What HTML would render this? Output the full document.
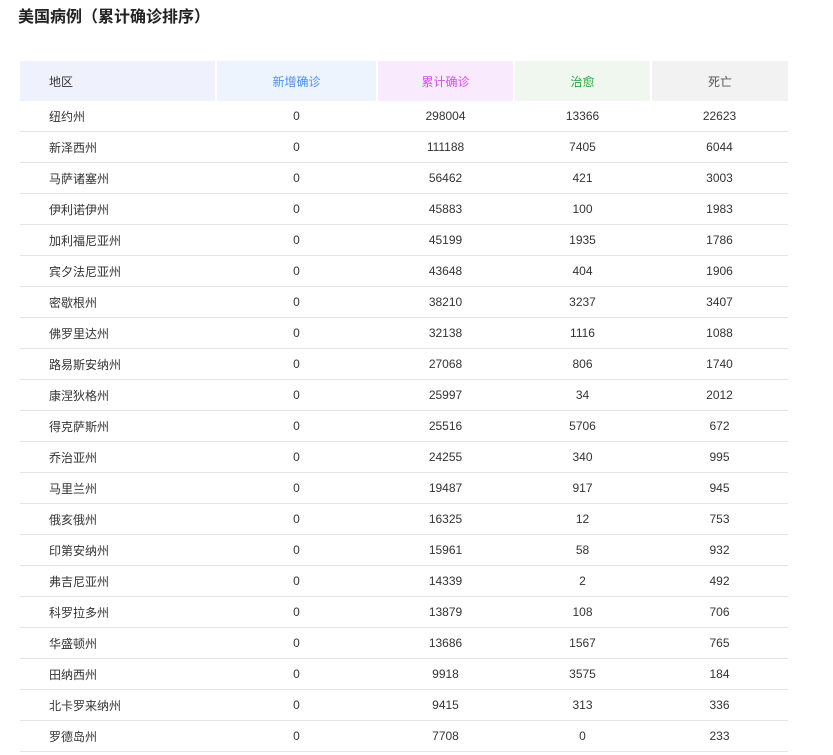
<!DOCTYPE html>
<html><head><meta charset="utf-8"><style>
body{margin:0;background:#fff;font-family:"Liberation Sans","Noto Sans CJK SC",sans-serif;color:#333;}
h1{position:absolute;left:18px;top:7px;margin:0;font-size:16px;font-weight:bold;color:#222;line-height:22px;}
table{position:absolute;left:20px;top:61px;width:768px;border-collapse:collapse;font-size:12px;}
th{height:40px;font-weight:normal;padding:0;border-right:2px solid #fff;}
th:last-child{border-right:none}
td{height:30px;padding:0;text-align:center;border-bottom:1px solid #e5e5e5;}
td:first-child,th:first-child{text-align:left;padding-left:29px;}
</style></head><body>
<h1>美国病例（累计确诊排序）</h1>
<table>
<colgroup><col style="width:196px"><col style="width:161px"><col style="width:137px"><col style="width:137px"><col style="width:137px"></colgroup>
<tr><th style="background:#eff2fd;color:#333">地区</th><th style="background:#edf4fe;color:#4c8df6">新增确诊</th><th style="background:#f9eafe;color:#d54ef0">累计确诊</th><th style="background:#eff7ef;color:#27a844">治愈</th><th style="background:#f2f2f2;color:#555">死亡</th></tr>
<tr><td>纽约州</td><td>0</td><td>298004</td><td>13366</td><td>22623</td></tr>
<tr><td>新泽西州</td><td>0</td><td>111188</td><td>7405</td><td>6044</td></tr>
<tr><td>马萨诸塞州</td><td>0</td><td>56462</td><td>421</td><td>3003</td></tr>
<tr><td>伊利诺伊州</td><td>0</td><td>45883</td><td>100</td><td>1983</td></tr>
<tr><td>加利福尼亚州</td><td>0</td><td>45199</td><td>1935</td><td>1786</td></tr>
<tr><td>宾夕法尼亚州</td><td>0</td><td>43648</td><td>404</td><td>1906</td></tr>
<tr><td>密歇根州</td><td>0</td><td>38210</td><td>3237</td><td>3407</td></tr>
<tr><td>佛罗里达州</td><td>0</td><td>32138</td><td>1116</td><td>1088</td></tr>
<tr><td>路易斯安纳州</td><td>0</td><td>27068</td><td>806</td><td>1740</td></tr>
<tr><td>康涅狄格州</td><td>0</td><td>25997</td><td>34</td><td>2012</td></tr>
<tr><td>得克萨斯州</td><td>0</td><td>25516</td><td>5706</td><td>672</td></tr>
<tr><td>乔治亚州</td><td>0</td><td>24255</td><td>340</td><td>995</td></tr>
<tr><td>马里兰州</td><td>0</td><td>19487</td><td>917</td><td>945</td></tr>
<tr><td>俄亥俄州</td><td>0</td><td>16325</td><td>12</td><td>753</td></tr>
<tr><td>印第安纳州</td><td>0</td><td>15961</td><td>58</td><td>932</td></tr>
<tr><td>弗吉尼亚州</td><td>0</td><td>14339</td><td>2</td><td>492</td></tr>
<tr><td>科罗拉多州</td><td>0</td><td>13879</td><td>108</td><td>706</td></tr>
<tr><td>华盛顿州</td><td>0</td><td>13686</td><td>1567</td><td>765</td></tr>
<tr><td>田纳西州</td><td>0</td><td>9918</td><td>3575</td><td>184</td></tr>
<tr><td>北卡罗来纳州</td><td>0</td><td>9415</td><td>313</td><td>336</td></tr>
<tr><td>罗德岛州</td><td>0</td><td>7708</td><td>0</td><td>233</td></tr>
</table>
</body></html>
